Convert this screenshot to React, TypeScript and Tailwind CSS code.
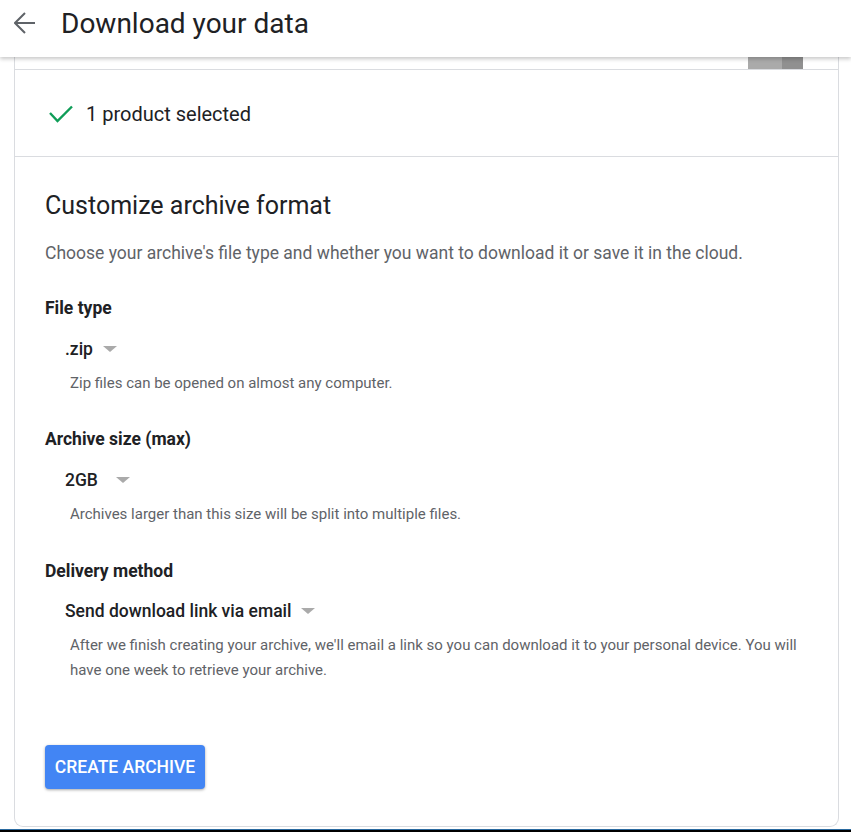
import React from "react";

function Caret() {
  return (
    <span className="inline-block w-0 h-0 border-l-[7px] border-r-[7px] border-t-[6px] border-l-transparent border-r-transparent border-t-[#aaaaaa]" />
  );
}

export default function App() {
  const font = { fontFamily: "Roboto, 'Noto Sans', sans-serif" };
  return (
    <div className="relative w-[851px] h-[832px] bg-white overflow-hidden flex flex-col" style={font}>
      <header className="relative z-10 h-[57px] shrink-0 bg-white flex items-start pt-[7px] shadow-[0_2px_4px_rgba(0,0,0,0.22)]">
        <svg width="22" height="22" viewBox="0 0 22 22" className="ml-[14px] mt-[5px]" fill="none" stroke="#5f6368" strokeWidth="2">
          <path d="M21 11H2M11 1L1 11l10 10" />
        </svg>
        <h1 className="ml-[25px] text-[28px] leading-[34px] text-[#202124] font-normal">Download your data</h1>
      </header>
      <div className="ml-[14px] w-[825px] border-x border-b border-[#dadce0] rounded-b-[9px] flex flex-col">
        <div className="h-[13px] border-b border-[#dadce0] flex justify-end pr-[35px]">
          <div className="w-[34px] h-[12px] bg-[#aaaaaa]" />
          <div className="w-[21px] h-[12px] bg-[#909090]" />
        </div>
        <div className="h-[87px] border-b border-[#dadce0] flex items-center pl-[34px] pt-[2px]">
          <svg width="24" height="18" viewBox="0 0 24 18" fill="none" stroke="#0f9d58" strokeWidth="2.4">
            <path d="M1 8l7.5 8L23 1.5" />
          </svg>
          <span className="ml-[13px] text-[20px] leading-[24px] text-[#202124]">1 product selected</span>
        </div>
        <div className="pl-[30px] pt-[33px] pb-[37px] flex flex-col">
          <h2 className="text-[25px] leading-[32px] text-[#202124] font-normal">Customize archive format</h2>
          <p className="mt-[19px] text-[17.5px] leading-[24px] text-[#5f6368]">
            Choose your archive's file type and whether you want to download it or save it in the cloud.
          </p>

          <div className="mt-[31px] text-[17.5px] leading-[24px] font-bold text-[#202124]">File type</div>
          <div className="mt-[17px] ml-[20px] flex items-center h-[24px]">
            <span className="text-[17.5px] font-medium text-[#202124]">.zip</span>
            <span className="ml-[10px] flex items-center"><Caret /></span>
          </div>
          <div className="mt-[12px] ml-[25px] text-[15px] leading-[20px] text-[#5f6368]">
            Zip files can be opened on almost any computer.
          </div>

          <div className="mt-[34px] text-[17.5px] leading-[24px] font-bold text-[#202124]">Archive size (max)</div>
          <div className="mt-[17px] ml-[20px] flex items-center h-[24px]">
            <span className="w-[41px] text-[17.5px] font-medium text-[#202124]">2GB</span>
            <span className="ml-[10px] flex items-center"><Caret /></span>
          </div>
          <div className="mt-[12px] ml-[25px] text-[15px] leading-[20px] text-[#5f6368]">
            Archives larger than this size will be split into multiple files.
          </div>

          <div className="mt-[35px] text-[17.5px] leading-[24px] font-bold text-[#202124]">Delivery method</div>
          <div className="mt-[16px] ml-[20px] flex items-center h-[24px]">
            <span className="text-[17.5px] font-medium text-[#202124]">Send download link via email</span>
            <span className="ml-[9px] flex items-center"><Caret /></span>
          </div>
          <div className="mt-[10px] ml-[25px] pr-[30px] text-[15px] leading-[25px] text-[#5f6368]">
            After we finish creating your archive, we'll email a link so you can download it to your personal device. You will have one week to retrieve your archive.
          </div>

          <div className="mt-[62px]">
            <button className="w-[160px] h-[44px] rounded-[4px] bg-[#4285f4] text-white text-[17.5px] font-medium shadow-[0_1px_3px_rgba(0,0,0,0.35)]">
              CREATE ARCHIVE
            </button>
          </div>
        </div>
      </div>
      <div className="mt-auto h-[3px] flex flex-col">
        <div className="h-px bg-[#2a6aa0]" />
        <div className="h-[2px] bg-black" />
      </div>
    </div>
  );
}
